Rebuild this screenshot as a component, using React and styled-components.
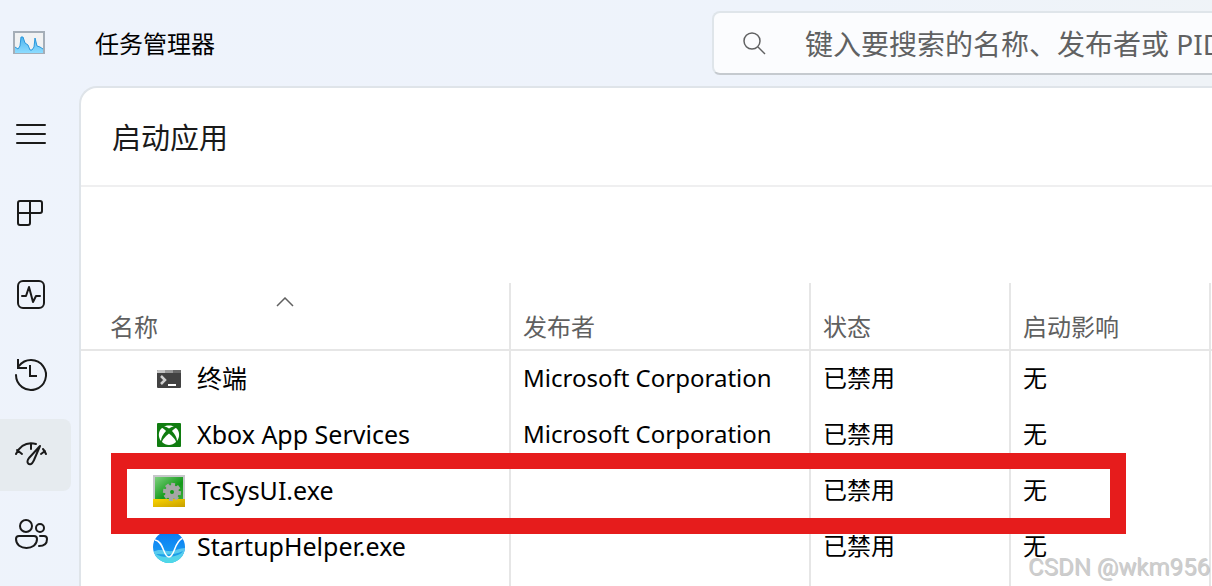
import React from "react";
import styled, { createGlobalStyle } from "styled-components";

const GlobalStyle = createGlobalStyle`
  *, *::before, *::after { box-sizing: border-box; }
  body {
    margin: 0;
    overflow: hidden;
    font-family: "Noto Sans", "Noto Sans CJK SC", sans-serif;
    font-size: 24px;
    line-height: 32px;
    color: #000;
  }
  button, input { font: inherit; }
`;

const Window = styled.div`
  position: relative;
  display: grid;
  grid-template-columns: 79px minmax(0, 1fr);
  height: 100vh;
  overflow: hidden;
  background: linear-gradient(135deg, #eef3fc 0%, #eef3fb 45%, #eff3f7 70%);
`;

const Sidebar = styled.aside`
  display: flex;
  flex-direction: column;
`;

const Logo = styled.div`
  flex: none;
  height: 99px;
  padding: 31px 0 0 13px;
  svg { display: block; }
`;

const Nav = styled.nav`
  display: flex;
  flex-direction: column;
  gap: 8px;
  padding-right: 8px;
`;

const NavButton = styled.button`
  display: flex;
  align-items: center;
  height: 72px;
  padding: 0 0 0 13px;
  border: 0;
  border-radius: 0 8px 8px 0;
  background: ${(p) => (p.$active ? "#e6ebef" : "transparent")};
  color: #1a1a1a;
`;

const NavIcon = styled.svg`
  width: 36px;
  height: 36px;
  fill: none;
  stroke: currentColor;
  stroke-width: 2;
  stroke-linecap: round;
  stroke-linejoin: round;
`;

const Content = styled.div`
  display: flex;
  flex-direction: column;
  min-width: 0;
`;

const TopBar = styled.header`
  display: grid;
  grid-template-columns: minmax(200px, 617px) minmax(0, 1fr);
  align-items: center;
  flex: none;
  height: 86px;
  padding-left: 16px;
`;

const AppTitle = styled.span`
  padding-top: 2px;
  font-size: 24px;
`;

const SearchBox = styled.label`
  display: flex;
  align-items: center;
  gap: 39px;
  height: 64px;
  padding-left: 28px;
  border: 2px solid #dfe5ea;
  border-right: 0;
  border-bottom-color: #c5cacf;
  border-radius: 8px 0 0 8px;
  background: #fbfcfe;
  svg { flex: none; }
`;

const SearchInput = styled.input`
  flex: 1;
  min-width: 0;
  padding: 2px 0 0;
  border: 0;
  outline: 0;
  background: transparent;
  font-size: 28px;
  line-height: 40px;
  &::placeholder { color: #606162; opacity: 1; }
`;

const Panel = styled.main`
  display: flex;
  flex: 1;
  flex-direction: column;
  min-height: 0;
  border: solid #dfe4e9;
  border-width: 2px 0 0 2px;
  border-radius: 18px 0 0 0;
  background: #fff;
`;

const PanelHeader = styled.div`
  flex: none;
  padding: 30px 31px 27px;
  border-bottom: 2px solid #efeff0;
`;

const Heading = styled.h1`
  margin: 0;
  font-size: 29px;
  font-weight: 400;
  line-height: 40px;
  color: #1a1a1a;
`;

const TableArea = styled.div`
  position: relative;
  padding-top: 96px;
`;

const Table = styled.table`
  width: 100%;
  table-layout: fixed;
  border-collapse: separate;
  border-spacing: 0;
`;

const Column = styled.col`
  width: ${(p) => (p.$width ? `${p.$width}px` : "auto")};
`;

const HeadCell = styled.th`
  height: 68px;
  padding: 0 0 6px ${(p) => (p.$first ? "29px" : "12px")};
  border-right: ${(p) => (p.$last ? "0" : "2px solid #e6e6e6")};
  border-bottom: 2px solid #e6e6e6;
  font-weight: 400;
  text-align: left;
  vertical-align: bottom;
  color: #606060;
`;

const SortMark = styled.svg`
  display: block;
  width: 18px;
  height: 10px;
  margin: 0 0 4px 166px;
  fill: none;
  stroke: #606060;
  stroke-width: 1.5;
`;

const Cell = styled.td`
  height: 56px;
  padding: 0 0 2px 12px;
  border-right: ${(p) => (p.$last ? "0" : "2px solid #e6e6e6")};
  white-space: nowrap;
`;

const AppName = styled.div`
  display: flex;
  align-items: center;
  gap: 12px;
  padding-left: 60px;
  font-size: 25px;
  svg { display: block; flex: none; margin-top: 2px; }
`;

const Highlight = styled.div`
  position: absolute;
  top: 266px;
  left: 30px;
  width: 1015px;
  height: 81px;
  border: 16px solid #e61c1c;
  pointer-events: none;
`;

const Watermark = styled.div`
  position: absolute;
  right: 2px;
  bottom: 3px;
  font-family: Roboto, sans-serif;
  font-size: 24px;
  color: #cdcdcd;
  text-shadow: 1px 1px 0 rgba(150, 150, 150, 0.5);
  pointer-events: none;
`;

const NAV = [
  { label: "菜单", icon: <path d="M4 8h28M4 17h28M4 26h28" /> },
  {
    label: "进程",
    icon: (
      <path d="M7 4H27a2 2 0 0 1 2 2V14a2 2 0 0 1-2 2H17V26a2 2 0 0 1-2 2H7a2 2 0 0 1-2-2V6a2 2 0 0 1 2-2ZM17 4V16H5" />
    ),
  },
  {
    label: "性能",
    icon: (
      <>
        <rect x="5" y="4" width="26" height="27" rx="5" />
        <path d="M9 19h4l3-9 4 15 3-6h4" />
      </>
    ),
  },
  {
    label: "应用历史记录",
    icon: (
      <>
        <path d="M3 18A15 15 0 1 0 6 9" />
        <path d="M5 3V11H13M17 9v10h6" strokeLinecap="square" strokeLinejoin="miter" />
      </>
    ),
  },
  {
    label: "启动应用",
    active: true,
    icon: (
      <>
        <path d="M3 17C8 7 15 5 23 7M4 13l5 4M18 7v5" />
        <path d="M27 9L16 21c-3 4-1 7 2 6 2-1 2-2 3-4L27 9ZM30 12C31 13 32 15 33 17M28 17l4-3" />
      </>
    ),
  },
  {
    label: "用户",
    icon: (
      <>
        <circle cx="13" cy="9" r="6" />
        <circle cx="27" cy="11" r="4" />
        <path d="M6 19H21a3 3 0 0 1 3 3C24 28 19 31 13.500 31S3 28 3 22a3 3 0 0 1 3-3ZM27 19h4a3 3 0 0 1 3 3c0 5-3 7-8 7" />
      </>
    ),
  },
];

const TerminalIcon = () => (
  <svg width="32" height="32" viewBox="0 0 32 32">
    <rect x="4" y="7" width="24" height="18" rx="1" fill="#424242" />
    <path d="M4 8a1 1 0 0 1 1-1h7v3H4z" fill="#c4c4c4" />
    <path d="M12 7h8v3h-8z" fill="#999" />
    <path d="M20 7h7a1 1 0 0 1 1 1v2h-8z" fill="#686868" />
    <path d="M8 13l4 4-4 4" fill="none" stroke="#d2d2d2" strokeWidth="2.500" />
    <path d="M15 22h8" stroke="#fff" strokeWidth="2" />
  </svg>
);

const XboxIcon = () => (
  <svg width="32" height="32" viewBox="0 0 32 32">
    <rect x="4" y="4" width="24" height="24" rx="1" fill="#107c10" />
    <path d="M11 7.500C13 6 19 6 21 7.500C19 7.500 17 9 16 9.500C15 9 13 7.500 11 7.500Z" fill="#fff" />
    <path d="M9 9C10 9 12 11 13 12C10 15 8 19 8 22C5 18 5 12 9 9Z" fill="#fff" />
    <path d="M23 9C22 9 20 11 19 12C22 15 24 19 24 22C27 18 27 12 23 9Z" fill="#fff" />
    <path d="M16 14.500C19 17 23 21 23 23C19 27 13 27 9 23C9 21 13 17 16 14.500Z" fill="#fff" />
  </svg>
);

const GearPanelIcon = () => (
  <svg width="32" height="32" viewBox="0 0 32 32">
    <defs>
      <linearGradient id="gearGreen" x1="0" y1="0" x2="1" y2="1">
        <stop offset="0" stopColor="#7dd07d" />
        <stop offset="0.600" stopColor="#149a1a" />
        <stop offset="1" stopColor="#3cac3c" />
      </linearGradient>
      <linearGradient id="gearGold" x1="0" y1="0" x2="1" y2="1">
        <stop offset="0" stopColor="#fbd500" />
        <stop offset="1" stopColor="#c79f00" />
      </linearGradient>
    </defs>
    <path d="M0 0h32v32H0z" fill="#c6c8ca" />
    <path d="M2 2h28v23H2z" fill="url(#gearGreen)" />
    <path d="M0 24h32v8H0z" fill="url(#gearGold)" />
    <g fill="#a6a6a6">
      <circle cx="19" cy="17" r="7" />
      {[0, 45, 90, 135].map((angle) => (
        <rect key={angle} x="17" y="8" width="4" height="18" transform={`rotate(${angle + 8} 19 17)`} />
      ))}
    </g>
    <circle cx="19" cy="17" r="2" fill="#169a1c" />
  </svg>
);

const HelperIcon = () => (
  <svg width="32" height="32" viewBox="0 0 32 32">
    <defs>
      <linearGradient id="helperBlue" x1="0" y1="0" x2="0" y2="1">
        <stop offset="0" stopColor="#0878f5" />
        <stop offset="1" stopColor="#20a8f0" />
      </linearGradient>
      <linearGradient id="helperSea" x1="0" y1="0" x2="0" y2="1">
        <stop offset="0" stopColor="#5cc4f2" />
        <stop offset="1" stopColor="#4fdbe6" />
      </linearGradient>
      <clipPath id="helperDisc">
        <circle cx="16" cy="16" r="16" />
      </clipPath>
    </defs>
    <g clipPath="url(#helperDisc)">
      <path d="M0 0h32v32H0z" fill="url(#helperBlue)" />
      <path d="M0 21c5-3 9-2 15-1s11-3 17-3v15H0z" fill="url(#helperSea)" />
      <path d="M3 23c8 0 17 2 27-3-3 6-20 8-27 3" fill="#1d9fe8" />
      <path d="M2 9c9 1 8 17 14 17S21 10 30 7" fill="none" stroke="#fff" strokeWidth="1.500" />
    </g>
  </svg>
);

const APPS = [
  { name: "终端", publisher: "Microsoft Corporation", Icon: TerminalIcon },
  { name: "Xbox App Services", publisher: "Microsoft Corporation", Icon: XboxIcon },
  { name: "TcSysUI.exe", publisher: "", Icon: GearPanelIcon },
  { name: "StartupHelper.exe", publisher: "", Icon: HelperIcon },
];

export default function App() {
  return (
    <Window>
      <GlobalStyle />
      <Sidebar>
        <Logo>
          <svg width="32" height="24" viewBox="0 0 32 24">
            <defs>
              <linearGradient id="logoFill" x1="0" y1="0" x2="0" y2="1">
                <stop offset="0" stopColor="#4db4ee" />
                <stop offset="1" stopColor="#8ddcff" />
              </linearGradient>
            </defs>
            <path d="M1 1h30v21H1z" fill="#f1f2f3" stroke="#a5aeb8" strokeWidth="2" />
            <path
              d="M2 16l3 2 2-3 1-9h2l2 6 3 2 2 5h2l2-3 1-9 2 8 3 1 3 2v4H2z"
              fill="url(#logoFill)"
            />
            <path
              d="M2 16l3 2 2-3 1-9h2l2 6 3 2 2 5h2l2-3 1-9 2 8 3 1 3 2"
              fill="none"
              stroke="#2b98dc"
            />
          </svg>
        </Logo>
        <Nav>
          {NAV.map((item) => (
            <NavButton key={item.label} type="button" $active={item.active} aria-label={item.label}>
              <NavIcon viewBox="0 0 36 36">{item.icon}</NavIcon>
            </NavButton>
          ))}
        </Nav>
      </Sidebar>
      <Content>
        <TopBar>
          <AppTitle>任务管理器</AppTitle>
          <SearchBox>
            <svg width="24" height="24" viewBox="0 0 24 24" fill="none" stroke="#606162" strokeWidth="1.500">
              <circle cx="10" cy="10" r="8" />
              <path d="M16 16l7 7" />
            </svg>
            <SearchInput aria-label="搜索" placeholder="键入要搜索的名称、发布者或 PID" />
          </SearchBox>
        </TopBar>
        <Panel>
          <PanelHeader>
            <Heading>启动应用</Heading>
          </PanelHeader>
          <TableArea>
            <Table>
              <colgroup>
                <Column $width={430} />
                <Column $width={300} />
                <Column $width={200} />
                <Column $width={200} />
                <Column />
              </colgroup>
              <thead>
                <tr>
                  <HeadCell $first aria-sort="ascending">
                    <SortMark viewBox="0 0 18 10">
                      <path d="M1 9l8-8 8 8" />
                    </SortMark>
                    名称
                  </HeadCell>
                  <HeadCell>发布者</HeadCell>
                  <HeadCell>状态</HeadCell>
                  <HeadCell>启动影响</HeadCell>
                  <HeadCell $last as="td" />
                </tr>
              </thead>
              <tbody>
                {APPS.map(({ name, publisher, Icon }) => (
                  <tr key={name}>
                    <Cell>
                      <AppName>
                        <Icon />
                        {name}
                      </AppName>
                    </Cell>
                    <Cell>{publisher}</Cell>
                    <Cell>已禁用</Cell>
                    <Cell>无</Cell>
                    <Cell $last />
                  </tr>
                ))}
                <tr>
                  <Cell />
                  <Cell />
                  <Cell />
                  <Cell />
                  <Cell $last />
                </tr>
              </tbody>
            </Table>
            <Highlight />
          </TableArea>
        </Panel>
      </Content>
      <Watermark>CSDN @wkm956</Watermark>
    </Window>
  );
}
